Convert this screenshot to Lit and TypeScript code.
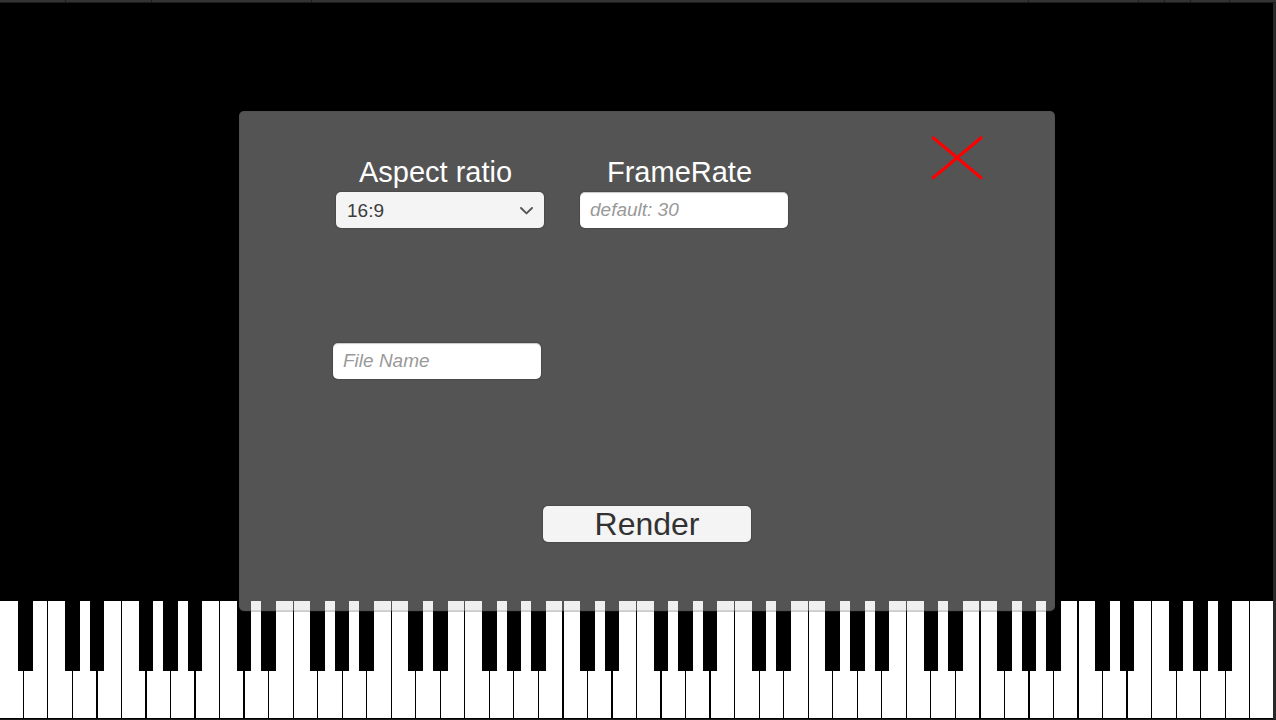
import { LitElement, html, svg, css } from "lit";
import { customElement } from "lit/decorators.js";

// Left edge and width of every gap between two white keys.
const GAPS: [number, number][] = [
  [23, 1], [47, 1], [72, 1], [96, 2], [121, 1], [145, 2], [170, 1], [194, 2],
  [219, 1], [243, 2], [268, 1], [293, 1], [317, 1], [342, 1], [366, 1],
  [391, 1], [415, 1], [440, 1], [464, 1], [489, 1], [513, 1], [538, 1],
  [562, 2], [587, 1], [611, 2], [636, 1], [660, 2], [685, 1], [709, 2],
  [734, 1], [759, 1], [783, 1], [808, 1], [832, 1], [857, 1], [881, 1],
  [906, 1], [930, 1], [955, 1], [979, 2], [1004, 1], [1028, 2], [1053, 1],
  [1077, 2], [1102, 1], [1126, 2], [1151, 1], [1176, 1], [1200, 1],
  [1225, 1], [1249, 1],
];

// Left and right edge of every black key.
const BLACK_KEYS: [number, number][] = [
  [18, 33], [65, 80], [90, 104], [139, 153], [163, 178], [188, 202],
  [237, 251], [261, 276], [310, 325], [335, 349], [359, 374], [408, 423],
  [433, 448], [482, 497], [507, 521], [531, 546], [580, 595], [605, 619],
  [654, 668], [678, 693], [703, 717], [752, 766], [776, 791], [825, 840],
  [850, 865], [875, 889], [924, 938], [948, 963], [997, 1012], [1022, 1036],
  [1046, 1061], [1095, 1110], [1120, 1134], [1169, 1183], [1193, 1208],
  [1218, 1232],
];

@customElement("piano-keys")
export class PianoKeys extends LitElement {
  static styles = css`
    :host {
      display: block;
    }
    .keys {
      display: block;
      width: 100%;
      height: 117px;
    }
  `;

  render() {
    return html`
      <svg class="keys" viewBox="0 0 1273 117" preserveAspectRatio="none" shape-rendering="crispEdges" aria-hidden="true">
        <rect width="1273" height="117" fill="#fff"></rect>
        ${GAPS.map(([x, w]) => svg`<rect x=${x} width=${w} height="117" fill="#000"></rect>`)}
        ${BLACK_KEYS.map(([a, b]) => svg`<rect x=${a} width=${b - a} height="70" fill="#000"></rect>`)}
      </svg>
    `;
  }
}

@customElement("render-dialog")
export class RenderDialog extends LitElement {
  static styles = css`
    :host {
      display: block;
      width: 100%;
      max-width: 816px;
    }
    .panel {
      box-sizing: border-box;
      display: flex;
      flex-direction: column;
      min-height: 500px;
      padding-bottom: 69px;
      border-radius: 5px;
      background: rgba(213, 213, 213, 0.392);
      box-shadow: 0 1px 0 rgba(50, 50, 50, 0.25), inset 0 0 0 1px rgba(60, 60, 60, 0.15);
      font-family: "Liberation Sans", Arial, sans-serif;
    }
    .top {
      display: flex;
      align-items: flex-start;
      gap: 36px;
      padding: 24px 71px 0 97px;
    }
    .field {
      display: flex;
      flex-direction: column;
      width: 208px;
      padding-top: 17px;
    }
    .label {
      padding-right: 9px;
      color: #fff;
      font-size: 29px;
      line-height: 40px;
      text-align: center;
    }
    .control {
      box-sizing: border-box;
      width: 208px;
      height: 36px;
      margin: 0;
      border: 0;
      border-radius: 5px;
      outline: none;
      font-family: inherit;
      font-size: 19px;
      color: #3c3c3c;
      box-shadow: 0 0 1px 1px rgba(40, 40, 40, 0.25);
    }
    .text {
      padding: 0 10px 1px;
      background: #fff;
      box-shadow: 0 0 1px 1px rgba(40, 40, 40, 0.25), inset 0 1px 1px rgba(0, 0, 0, 0.22);
    }
    .text::placeholder {
      color: #999;
      font-style: italic;
      opacity: 1;
    }
    .select-wrap {
      display: grid;
      align-items: center;
    }
    .select-wrap > * {
      grid-area: 1 / 1;
    }
    .select {
      appearance: none;
      padding: 1px 34px 0 11px;
      background: #f4f4f4;
    }
    .chevron {
      justify-self: end;
      width: 14px;
      height: 9px;
      margin-right: 11px;
      pointer-events: none;
    }
    .close {
      flex: none;
      width: 54px;
      height: 46px;
      margin-left: auto;
      padding: 0;
      border: 0;
      background: none;
    }
    .cross {
      display: block;
    }
    .file {
      margin: 115px 0 0 94px;
    }
    .submit {
      align-self: center;
      margin-top: auto;
      padding: 0;
      background: #f4f4f4;
      color: #323232;
      font-size: 32px;
      line-height: 36px;
    }
  `;

  render() {
    return html`
      <form class="panel" @submit=${(e: Event) => e.preventDefault()}>
        <div class="top">
          <div class="field">
            <label class="label" for="ratio">Aspect ratio</label>
            <div class="select-wrap">
              <select class="control select" id="ratio">
                <option>16:9</option>
              </select>
              <svg class="chevron" viewBox="0 0 14 9" aria-hidden="true">
                <path d="M2 2 L7.5 7.4 L13 2" fill="none" stroke="#555" stroke-width="1.9" stroke-linecap="round" stroke-linejoin="round"></path>
              </svg>
            </div>
          </div>
          <div class="field">
            <label class="label" for="rate">FrameRate</label>
            <input class="control text" id="rate" type="text" placeholder="default: 30" />
          </div>
          <button class="close" type="button" aria-label="Close">
            <svg class="cross" width="54" height="46" viewBox="0 0 54 46" aria-hidden="true">
              <path d="M2.3 2 L52 43.5 M52 2 L2.3 43.5" stroke="#f00" stroke-width="3"></path>
            </svg>
          </button>
        </div>
        <input class="control text file" type="text" placeholder="File Name" aria-label="File Name" />
        <button class="control submit" type="submit">Render</button>
      </form>
    `;
  }
}

@customElement("app-root")
export class AppRoot extends LitElement {
  static styles = css`
    :host {
      display: flex;
      flex-direction: column;
      min-height: 100vh;
      background: #000;
    }
    .toolbar {
      display: flex;
      height: 2px;
      background: #333;
      border-bottom: 1px solid #1c1c1c;
    }
    .segment {
      box-sizing: border-box;
      border-right: 1px solid #1c1c1c;
    }
    .wide {
      flex: 1;
    }
    .stage {
      flex: 1;
      display: grid;
      border-right: 3px solid #292929;
      border-bottom: 1px solid #1c1c20;
    }
    .stage > * {
      grid-area: 1 / 1;
    }
    .piano {
      align-self: end;
      padding-bottom: 1px;
    }
    .dialog {
      justify-self: center;
      margin-top: 108px;
      margin-left: 21px;
      z-index: 1;
    }
  `;

  render() {
    const left = [66, 86, 160];
    const right = [110, 26, 26, 39];
    const segment = (w: number) => html`<div class="segment" style="width:${w}px"></div>`;
    return html`
      <div class="toolbar">
        ${left.map(segment)}
        <div class="segment wide"></div>
        ${right.map(segment)}
        <div style="width:46px"></div>
      </div>
      <main class="stage">
        <piano-keys class="piano"></piano-keys>
        <render-dialog class="dialog"></render-dialog>
      </main>
    `;
  }
}
